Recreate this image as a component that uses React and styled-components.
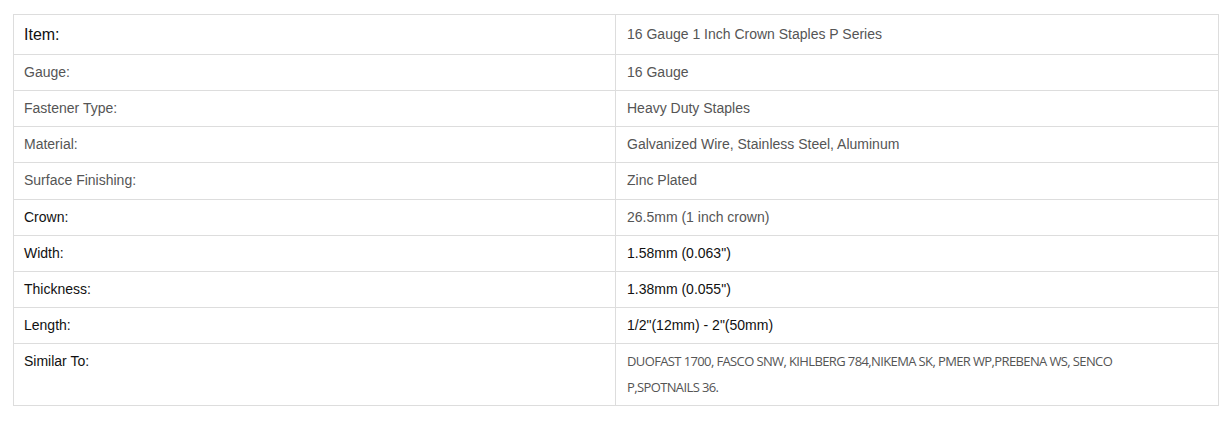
import React from "react";
import styled, { createGlobalStyle } from "styled-components";

const GlobalStyle = createGlobalStyle`
  body {
    margin: 0;
    background: #fff;
    font-family: "Liberation Sans", Arial, sans-serif;
  }
`;

const Wrapper = styled.div`
  padding: 14px 11px 0 13px;
`;

const SpecTable = styled.table`
  width: 1206px;
  border-collapse: collapse;
  table-layout: fixed;
  border: 1px solid #ddd;
`;

const LabelCol = styled.col`
  width: 602px;
`;

const Cell = styled.td`
  border: 1px solid #ddd;
  padding: 8px 10px 8px ${props => (props.value ? "11px" : "10px")};
  font-size: ${props => (props.big ? "16px" : "14px")};
  line-height: ${props => (props.big ? "23px" : "19.13px")};
  color: ${props => (props.dark ? "#111" : "#555")};
  vertical-align: ${props => (props.middle || props.big ? "middle" : "top")};
  text-align: left;
`;

const SimilarCell = styled.td`
  border: 1px solid #ddd;
  padding: 4px 100px 5px 11px;
  font-family: "Open Sans", sans-serif;
  font-size: 13px;
  letter-spacing: -0.62px;
  line-height: 26px;
  color: #555;
  vertical-align: top;
`;

const rows = [
  { label: "Gauge:", value: "16 Gauge" },
  { label: "Fastener Type:", value: "Heavy Duty Staples" },
  { label: "Material:", value: "Galvanized Wire, Stainless Steel, Aluminum" },
  { label: "Surface Finishing:", value: "Zinc Plated" },
  { label: "Crown:", value: "26.5mm (1 inch crown)", darkLabel: true },
  { label: "Width:", value: "1.58mm (0.063\")", darkLabel: true, darkValue: true },
  { label: "Thickness:", value: "1.38mm (0.055\")", darkLabel: true, darkValue: true },
  { label: "Length:", value: "1/2\"(12mm) - 2\"(50mm)", darkLabel: true, darkValue: true }
];

const App = () => {
  return (
    <Wrapper>
      <GlobalStyle />
      <SpecTable>
        <colgroup>
          <LabelCol />
          <col />
        </colgroup>
        <tbody>
          <tr>
            <Cell big dark>Item:</Cell>
            <Cell value middle>16 Gauge 1 Inch Crown Staples P Series</Cell>
          </tr>
          {rows.map(row => (
            <tr key={row.label}>
              <Cell dark={row.darkLabel}>{row.label}</Cell>
              <Cell value dark={row.darkValue}>{row.value}</Cell>
            </tr>
          ))}
          <tr>
            <Cell dark>Similar To:</Cell>
            <SimilarCell>
              DUOFAST 1700, FASCO SNW, KIHLBERG 784,NIKEMA SK, PMER WP,PREBENA WS, SENCO P,SPOTNAILS 36.
            </SimilarCell>
          </tr>
        </tbody>
      </SpecTable>
    </Wrapper>
  );
};

export default App;
